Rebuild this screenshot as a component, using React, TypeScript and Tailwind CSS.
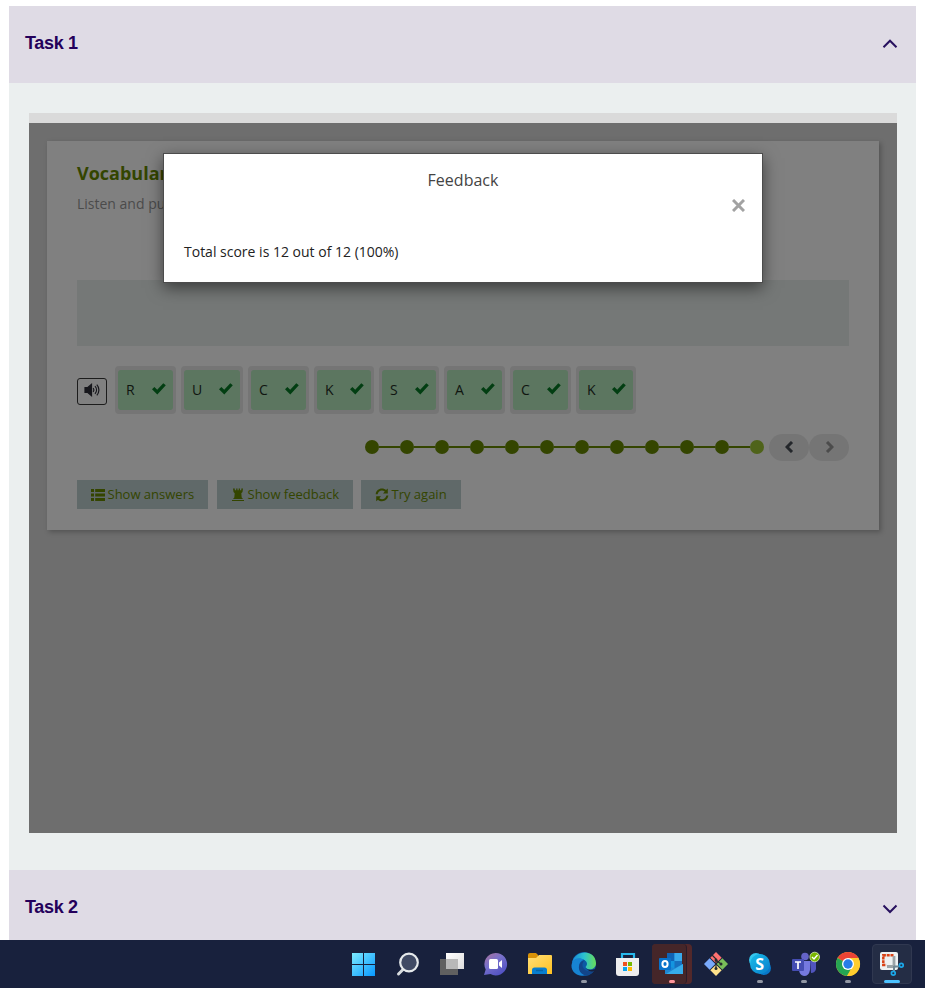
import React from "react";

const tiles = [
  { letter: "R", width: "w-[61px]" },
  { letter: "U", width: "w-[62px]" },
  { letter: "C", width: "w-[61px]" },
  { letter: "K", width: "w-[60px]" },
  { letter: "S", width: "w-[60px]" },
  { letter: "A", width: "w-[61px]" },
  { letter: "C", width: "w-[61px]" },
  { letter: "K", width: "w-[60px]" },
];

function Chevron({ up = false }: { up?: boolean }) {
  return (
    <svg width="16" height="10" viewBox="0 0 16 10" fill="none" stroke="#27105e" strokeWidth="2">
      <path d={up ? "M1.5 8.2L8 1.7l6.5 6.5" : "M1.5 1.5L8 8l6.5-6.5"} />
    </svg>
  );
}

function Check() {
  return (
    <svg width="14" height="12" viewBox="0 0 14 12" fill="#023e12">
      <path d="M0 6.3L2.4 4l2.8 2.7L11.3.3 13.8 2.3 5.3 11.6z" />
    </svg>
  );
}

function Tile({ letter, width }: { letter: string; width: string }) {
  return (
    <div className={`${width} h-12 shrink-0 rounded-[4px] border-[3px] border-[#757575] bg-[#757575] pt-px`}>
      <div className="flex h-10 items-center justify-between rounded-[3px] bg-[#5c7660] pl-2 pr-[7.5px] text-sm text-[#101510]">
        <span>{letter}</span>
        <span className="-mt-[3px]">
          <Check />
        </span>
      </div>
    </div>
  );
}

function Speaker() {
  return (
    <div className="mt-3 flex h-[27px] w-[30px] items-center justify-center rounded-[3px] border border-[#1c1c1c] pb-[3px]">
      <svg width="16" height="14" viewBox="0 0 16 14" fill="none" stroke="#17171c" strokeWidth="1.2">
        <path d="M1 4.7h2.5l4-3.4v11.4l-4-3.4H1z" fill="#17171c" />
        <path d="M9.2 5c.9 1.2.9 2.8 0 4M11 3.2c2 2.2 2 5.4 0 7.6M12.8 1.7c2.8 3.1 2.8 7.5 0 10.6" />
      </svg>
    </div>
  );
}

function Progress() {
  return (
    <div className="flex items-center">
      {Array.from({ length: 12 }, (_, i) => (
        <React.Fragment key={i}>
          {i > 0 && <div className="h-[2px] w-[21px] bg-[#344500]" />}
          <div className={i === 11 ? "size-3.5 rounded-full bg-[#4f631a]" : "size-3.5 rounded-full bg-[#344500]"} />
        </React.Fragment>
      ))}
    </div>
  );
}

function Pill({ next = false }: { next?: boolean }) {
  return (
    <div className="flex h-[27px] w-10 items-center justify-center rounded-[14px] bg-[#757575] pb-px">
      <svg width="9" height="12" viewBox="0 0 9 12" fill="none" stroke={next ? "#4c4c4c" : "#24272b"} strokeWidth="3">
        <path d={next ? "M2 1l5 5-5 5" : "M7 1L2 6l5 5"} />
      </svg>
    </div>
  );
}

function ActionButton({ className, label, children }: { className: string; label: string; children: React.ReactNode }) {
  return (
    <div className={`${className} flex h-[29px] items-center gap-[3px] bg-[#606969] pl-[13.5px] text-[13px] whitespace-nowrap text-[#344500]`}>
      <svg width="14" height="14" viewBox="0 0 14 14" fill="#344500" className="shrink-0">
        {children}
      </svg>
      <span>{label}</span>
    </div>
  );
}

function Feedback() {
  return (
    <div className="absolute left-[134px] top-[30px] h-[130px] w-[600px] border border-[#4c4c4c] bg-white shadow-[0_5px_15px_rgba(0,0,0,0.5)]">
      <div className="pt-[14px] text-center text-base leading-6 text-[#444]">Feedback</div>
      <div className="flex justify-end pr-[17px] pt-[7px]">
        <svg width="13" height="13" viewBox="0 0 13 13" stroke="#a2a2a2" strokeWidth="3">
          <path d="M1 1l11 11M12 1L1 12" />
        </svg>
      </div>
      <div className="pl-5 pt-[30px] text-sm leading-5 text-[#222]">Total score is 12 out of 12 (100%)</div>
    </div>
  );
}

function Exercise() {
  return (
    <div className="relative h-[720px] border-t-[10px] border-[#dadada] bg-[#6e6e6e] px-[18px] pt-[18px] font-['Open_Sans',sans-serif]">
      <div className="h-[389px] bg-[#808080] px-[30px] pt-5 shadow-[2px_2px_5px_rgba(0,0,0,0.25)]">
        <div className="text-lg leading-6 font-bold text-[#344500]">Vocabulary</div>
        <div className="mt-[9px] text-sm leading-5 text-[#4b4b4b]">Listen and put</div>
        <div className="mt-[66px] h-[66px] bg-[#757877]" />
        <div className="mt-5 flex">
          <Speaker />
          <div className="ml-2 flex gap-[5px]">
            {tiles.map((tile, i) => (
              <Tile key={i} letter={tile.letter} width={tile.width} />
            ))}
          </div>
        </div>
        <div className="mt-5 flex h-[27px] items-center justify-end">
          <div className="pb-[2px]">
            <Progress />
          </div>
          <div className="ml-[5px] flex">
            <Pill />
            <Pill next />
          </div>
        </div>
        <div className="mt-[19px] flex">
          <ActionButton className="w-[131px]" label="Show answers">
            <path d="M0 1h3v3H0zM4.2 1H14v3H4.2zM0 5.5h3v3H0zM4.2 5.5H14v3H4.2zM0 10h3v3H0zM4.2 10H14v3H4.2z" />
          </ActionButton>
          <ActionButton className="ml-[9px] w-[136px]" label="Show feedback">
            <path d="M2 .5h1.8v1.7h1.4V.5h1.3v1.7h1.2V.5H9v1.7h1.3V.5H12l-.5 3.5-1.2 1.2.4 4.3 1.3 1.5H2l1.3-1.5.4-4.3L2.5 4zM1 12h12v1H1z" />
          </ActionButton>
          <ActionButton className="ml-2 w-[100px]" label="Try again">
            <path d="M.7 6.2C1 2.8 3.6.5 7 .5c1.5 0 2.9.5 4 1.5L12.8.5v5H8l1.8-2C7 1.4 3.3 2.7 2.6 6.2zM13.3 7.5c-.3 3.4-2.9 5.7-6.3 5.7-1.5 0-2.9-.5-4-1.5l-1.8 1.6v-5H6l-1.8 2c2.8 2.1 6.5.8 7.2-2.8z" />
          </ActionButton>
        </div>
      </div>
      <Feedback />
    </div>
  );
}

function TaskbarItem({ children, marker = "" }: { children: React.ReactNode; marker?: string }) {
  return (
    <div className="flex w-11 shrink-0 flex-col items-center pt-3">
      <svg width="26" height="26" viewBox="0 0 26 26" className="overflow-visible">
        {children}
      </svg>
      {marker && <div className={`${marker} mt-[2px] h-[3px] rounded-full`} />}
    </div>
  );
}

function Taskbar() {
  return (
    <div className="flex h-12 bg-[#18213d] pl-[342px] font-['Open_Sans',sans-serif]">
      <svg width="0" height="0" className="absolute">
        <defs>
          <linearGradient id="win" x2="1" y2="1">
            <stop stopColor="#7debff" />
            <stop offset="1" stopColor="#0798ff" />
          </linearGradient>
          <linearGradient id="folder" x2="1" y2="1">
            <stop stopColor="#ffe079" />
            <stop offset="1" stopColor="#ffc021" />
          </linearGradient>
          <linearGradient id="edge" x2="1">
            <stop stopColor="#1989d9" />
            <stop offset=".5" stopColor="#2bc2cf" />
            <stop offset="1" stopColor="#69dd58" />
          </linearGradient>
          <linearGradient id="chat" x2=".7" y2="1">
            <stop stopColor="#ad7298" />
            <stop offset=".45" stopColor="#7871cb" />
            <stop offset="1" stopColor="#5051c4" />
          </linearGradient>
          <linearGradient id="skype" x2="1" y2="1">
            <stop stopColor="#18bde9" />
            <stop offset="1" stopColor="#087dcc" />
          </linearGradient>
          <linearGradient id="pane" x2="1" y2="1">
            <stop stopColor="#fff" />
            <stop offset="1" stopColor="#ddd" />
          </linearGradient>
        </defs>
      </svg>
      <TaskbarItem>
        <path d="M1 1h11v11H1zM13 1h11v11H13zM1 13h11v11H1zM13 13h11v11H13z" fill="url(#win)" />
      </TaskbarItem>
      <TaskbarItem>
        <path d="M9 16.5L3.500 22" stroke="#d8dcdf" strokeWidth="3" strokeLinecap="round" />
        <circle cx="14" cy="10.5" r="8.8" fill="#404a64" stroke="#e5e9eb" strokeWidth="2.2" />
      </TaskbarItem>
      <TaskbarItem>
        <path d="M7 1h18v16H7z" fill="url(#pane)" />
        <path d="M1 7h18v16H1z" fill="#606060" />
        <path d="M7 7h12v10H7z" fill="#b8b8b8" />
      </TaskbarItem>
      <TaskbarItem>
        <path d="M12.5 1a11.2 11.2 0 1 1-5 21L1 23l1.7-5.5A11.2 11.2 0 0 1 12.5 1z" fill="url(#chat)" />
        <rect x="6" y="7" width="9" height="10" rx="1.5" fill="#fff" />
        <path d="M16 10.5L19 8v8l-3-2.5z" fill="#fff" />
      </TaskbarItem>
      <TaskbarItem>
        <path d="M1 3q0-2 2-2h6l2 2v4H1z" fill="#d89208" />
        <path d="M1 6h8l3-3h12q1 0 1 1v18H1z" fill="url(#folder)" />
        <path d="M5 22v-4q0-2.5 2.5-2.5h10q2.5 0 2.5 2.5v4z" fill="#087ecf" />
        <path d="M9 18.5h7" stroke="#0864a5" strokeWidth="1.5" />
      </TaskbarItem>
      <TaskbarItem marker="w-1.5 bg-[#9297a4]">
        <circle cx="13" cy="12" r="12" fill="#0c59a4" />
        <path d="M1 11C3-2 24-4 25 11c.3 6-7 8-10 4.8-1-1.2 1-1.8 1-4C16 7 5 4 1 11z" fill="url(#edge)" />
        <path d="M1 11C3 6 9 5 13 8 6 9 7 19 15 22c-7 5-17-3-14-11z" fill="#1784d3" />
        <path d="M14 8c-5 4-2 10 3 11 3 .6 6-.5 7-2-2 5-7 7-11 6C6 20 6 10 14 8z" fill="#12458a" />
        <path d="M14.5 16q4 3.2 9 1l1 1.4q-5 3-10-2.4" fill="#18213d" />
      </TaskbarItem>
      <TaskbarItem>
        <path d="M7 8V2h12v6" fill="none" stroke="#28b9ec" strokeWidth="2.2" />
        <path d="M1 6h23v15q0 3-3 3H4q-3 0-3-3z" fill="#eeeeef" />
        <path d="M8 10h4v4H8z" fill="#ef511f" />
        <path d="M13 10h4v4h-4z" fill="#75b900" />
        <path d="M8 15h4v4H8z" fill="#08a3ed" />
        <path d="M13 15h4v4h-4z" fill="#ffb900" />
      </TaskbarItem>
      <div className="mt-1 mr-[2px] ml-[2px] h-10 w-10 shrink-0 rounded-[4px] bg-[#52282a]">
        <div className="flex h-10 w-[35px] flex-col items-center rounded-[4px] border-r border-[#281c29] bg-[#452629] pt-2 pl-[5px]">
          <svg width="26" height="26" viewBox="0 0 26 26" className="shrink-0">
            <rect x="8" y="1" width="15" height="16" rx="1" fill="#1495df" />
            <path d="M8 1h7.5v8H8z" fill="#1063b5" />
            <path d="M15.5 1H23v8h-7.5z" fill="#38a9eb" />
            <path d="M15.5 9H23v7h-7.5z" fill="#1770bf" />
            <path d="M6 12l9 4.5 9-4.5v10H6z" fill="#1f86d1" />
            <path d="M24 12L7 22h17z" fill="#36acea" />
            <rect y="6" width="12" height="12" rx="1" fill="#0872cb" />
            <ellipse cx="6" cy="12" rx="2.6" ry="3" fill="none" stroke="white" strokeWidth="2" />
          </svg>
          <div className="mt-[2px] h-[3px] w-1.5 rounded-full bg-[#ff969d]" />
        </div>
      </div>
      <TaskbarItem>
        <g transform="rotate(45 13 12)">
          <path d="M4.5 3.5h8v8h-8z" fill="#ff7171" />
          <path d="M13.5 3.5h8v8h-8z" fill="#79bd59" />
          <path d="M4.5 12.5h8v8h-8z" fill="#79aafc" />
          <path d="M13.5 12.5h8v8h-8z" fill="#ffe28b" />
        </g>
        <path d="M9 3l4 4v10M13 8l5 4" fill="none" stroke="#252b2d" strokeWidth="1.2" />
        <circle cx="13" cy="8" r="1.5" fill="#252b2d" />
        <circle cx="18" cy="12" r="1.5" fill="#252b2d" />
        <circle cx="13" cy="16.5" r="1.5" fill="#252b2d" />
      </TaskbarItem>
      <TaskbarItem marker="w-1.5 bg-[#9297a4]">
        <circle cx="9" cy="8" r="7" fill="#35c6ed" />
        <circle cx="17" cy="16" r="7" fill="#0877c9" />
        <circle cx="13" cy="12" r="10" fill="url(#skype)" />
        <text x="8.2" y="17.5" fill="white" fontSize="16" fontWeight="700">S</text>
      </TaskbarItem>
      <TaskbarItem marker="w-1.5 bg-[#9297a4]">
        <circle cx="14" cy="4.5" r="3.8" fill="#6463c8" />
        <path d="M8 9h11v9q-1 6-6 6-5-1-5-7z" fill="#7579df" />
        <path d="M19 9h6v8q-1 4-5 4z" fill="#5054bd" />
        <rect x="1" y="7" width="12" height="12" rx="1" fill="#454db2" />
        <path d="M4 10h6M7 10v7" stroke="white" strokeWidth="1.7" />
        <circle cx="23.7" cy="5" r="4.8" fill="#78b600" stroke="#d9eaba" strokeWidth=".8" />
        <path d="M21 5l2 2 3.5-4" fill="none" stroke="white" strokeWidth="1.4" />
      </TaskbarItem>
      <TaskbarItem marker="w-1.5 bg-[#9297a4]">
        <circle cx="13" cy="12" r="12" fill="#ffcd2e" />
        <path d="M13 12L2.6 6A12 12 0 0 1 23.4 6z" fill="#eb4335" />
        <path d="M2.6 6A12 12 0 0 0 12 24l5-9-4-3z" fill="#25a553" />
        <path d="M13 6h10.4A12 12 0 0 1 12 24l6-9z" fill="#ffcd2e" />
        <circle cx="13" cy="12" r="6" fill="white" />
        <circle cx="13" cy="12" r="4.7" fill="#287de8" />
      </TaskbarItem>
      <div className="ml-[2px] mt-1 flex h-10 w-10 shrink-0 flex-col items-center rounded-[4px] border border-[#303850] bg-[#242d45] pt-[7px]">
        <svg width="26" height="26" viewBox="0 0 26 26" className="overflow-visible">
          <rect x="1" y="0" width="18" height="18" rx="2" fill="#eef2f3" />
          <path d="M14.5 3.3H4.3V13h3" fill="none" stroke="#d94216" strokeWidth="2.5" strokeDasharray="3 .8" />
          <path d="M15 4v10.5H8" fill="none" stroke="#9ba4a8" strokeWidth="2.8" />
          <path d="M15 14v5M15 14.5h5" stroke="#718894" strokeWidth="2" />
          <circle cx="14.3" cy="21.3" r="1.9" fill="none" stroke="#1ba8ea" strokeWidth="1.7" />
          <circle cx="22.3" cy="13.3" r="1.9" fill="none" stroke="#1ba8ea" strokeWidth="1.7" />
        </svg>
        <div className="mt-[2px] h-[3px] w-4 rounded-full bg-[#4cc2ff]" />
      </div>
    </div>
  );
}

export default function App() {
  return (
    <div className="h-[988px] w-[925px] overflow-hidden bg-white">
      <main className="mr-[9px] ml-[9px] pt-1.5 font-['Liberation_Sans',sans-serif]">
        <div className="flex h-[77px] items-center justify-between bg-[#dfdbe5] px-4 pr-[18px]">
          <h2 className="-mt-1 text-lg font-bold tracking-[-0.35px] text-[#24005b]">Task 1</h2>
          <span className="-mt-px">
            <Chevron up />
          </span>
        </div>
        <div className="h-[787px] bg-[#ebefef] pt-[30px] pr-[19px] pl-5">
          <Exercise />
        </div>
        <div className="flex h-[70px] items-center justify-between bg-[#dfdbe5] px-4 pr-[18px]">
          <h2 className="mt-1 text-lg font-bold tracking-[-0.35px] text-[#24005b]">Task 2</h2>
          <span className="mt-2">
            <Chevron />
          </span>
        </div>
      </main>
      <Taskbar />
    </div>
  );
}
